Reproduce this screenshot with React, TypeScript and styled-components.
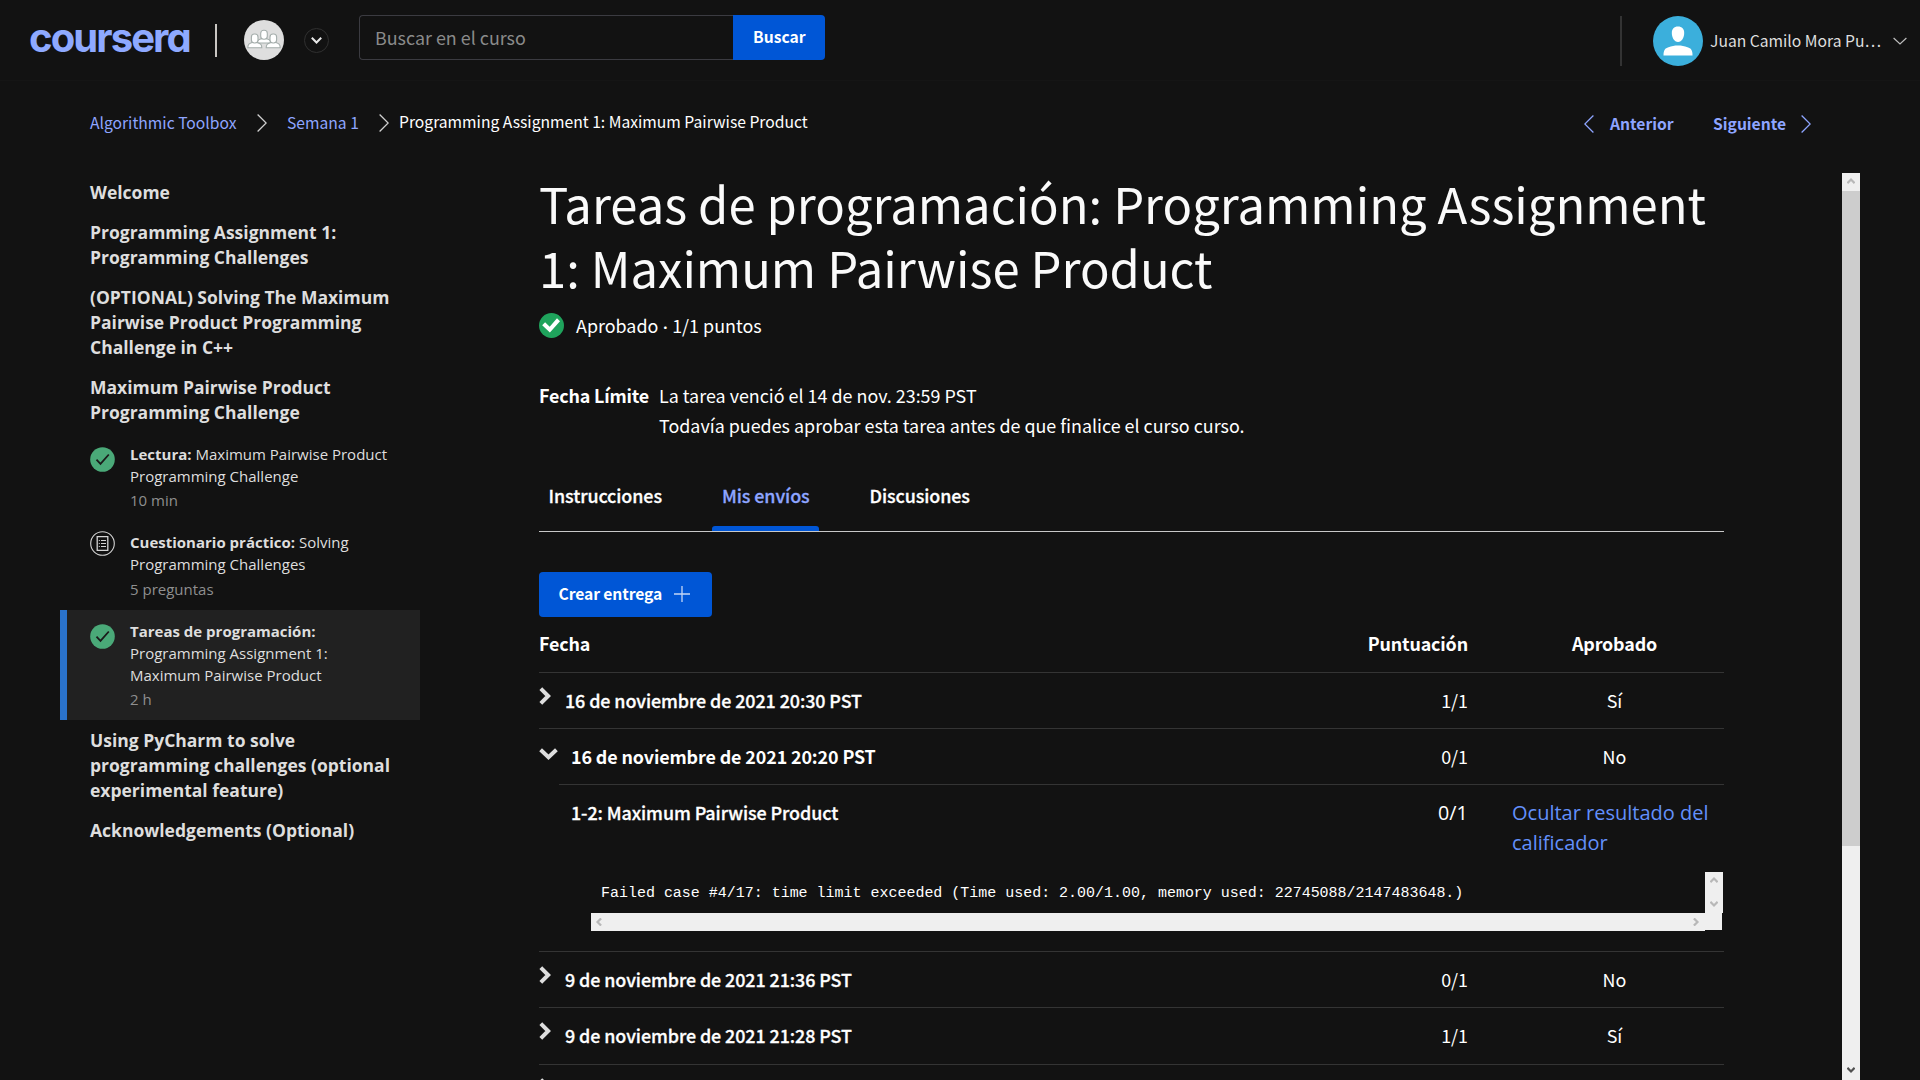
import React from "react";
import styled, { createGlobalStyle } from "styled-components";

const sans = `"Noto Sans CJK SC", "Noto Sans", sans-serif`;
const open = `"Open Sans", "Noto Sans", sans-serif`;

const GlobalStyle = createGlobalStyle`
  * { box-sizing: border-box; }
  html, body { margin: 0; padding: 0; background: #121212; overflow: hidden; }
  svg { display: block; flex: none; }
  button, input { font: inherit; border: 0; margin: 0; padding: 0; background: none; }
`;

const Page = styled.div`
  width: 1920px;
  height: 1080px;
  overflow: hidden;
  background: #121212;
  color: #fff;
  font-family: ${sans};
  font-size: 17.9px;
  display: flex;
  flex-direction: column;
`;

const Label = styled.span<{ $size?: number; $weight?: number; $ls?: number; $color?: string }>`
  display: block;
  white-space: nowrap;
  font-size: ${(p) => p.$size ?? 17.9}px;
  font-weight: ${(p) => p.$weight ?? 400};
  letter-spacing: ${(p) => p.$ls ?? 0}px;
  color: ${(p) => p.$color ?? "inherit"};
`;
const SmallLabel = styled(Label)`
  font-size: 15.66px;
`;
const SemiLabel = styled(Label)`
  font-weight: 500;
  letter-spacing: -0.08px;
  -webkit-text-stroke: 0.3px currentColor;
`;
const Dot = styled.span`
  font-family: Lato, sans-serif;
`;

/* Header */
const Header = styled.header`
  height: 81px;
  flex: none;
  display: flex;
  align-items: flex-start;
  border-bottom: 1px solid #151515;
`;
const Logo = styled.div`
  margin: 13px 0 0 29px;
  width: 186px;
  height: 50px;
  line-height: 50px;
  font-family: Inter, sans-serif;
  font-size: 40px;
  font-weight: 700;
  letter-spacing: -1.9px;
  font-feature-settings: "cv11" 1;
  color: #8ea9ff;
`;
const LogoDivider = styled.div`
  width: 2px;
  height: 33px;
  margin-top: 24px;
  background: #c9c6c2;
`;
const GroupBadge = styled.div`
  width: 40px;
  height: 40px;
  margin: 20px 0 0 27px;
  padding-bottom: 3px;
  border-radius: 50%;
  background: #dedede;
  display: flex;
  align-items: center;
  justify-content: center;
`;
const RoundButton = styled.button`
  width: 25px;
  height: 25px;
  margin: 28px 0 0 20px;
  border: 1px solid #303030;
  border-radius: 50%;
  display: flex;
  align-items: center;
  justify-content: center;
`;
const Search = styled.form`
  display: flex;
  height: 45px;
  margin: 15px 0 0 30px;
`;
const SearchField = styled.div`
  width: 374px;
  border: 1px solid #3b3b41;
  border-right: 0;
  border-radius: 4px 0 0 4px;
  padding-left: 15px;
  line-height: 43px;
`;
const SearchButton = styled.button`
  width: 92px;
  border-radius: 0 4px 4px 0;
  background: #0056d6;
  color: #fff;
  line-height: 43px;
  padding: 0 0 2px 20px;
  text-align: left;
`;
const Account = styled.div`
  margin: 16px 0 0 auto;
  width: 300px;
  height: 50px;
  border-left: 2px solid #333;
  padding-left: 31px;
  display: flex;
  align-items: center;
`;
const AccountName = styled.div`
  width: 190px;
  padding-left: 7px;
  line-height: 50px;
  color: #dfdfdf;
`;

/* Breadcrumbs */
const CrumbBar = styled.nav`
  height: 92px;
  flex: none;
  display: flex;
  align-items: flex-start;
  padding-left: 90px;
  color: #8ea5ff;
`;
const Crumb = styled.div<{ $w: number; $top?: number }>`
  width: ${(p) => p.$w}px;
  margin-top: ${(p) => p.$top ?? 27}px;
  line-height: 30px;
`;
const CrumbIcon = styled.div<{ $w: number }>`
  width: ${(p) => p.$w}px;
  margin-top: 33px;
`;
const Pager = styled.div`
  margin: 34px 109px 0 auto;
  width: 227px;
  display: flex;
  align-items: flex-start;
  line-height: 30px;
`;
const PagerText = styled.div<{ $w: number }>`
  width: ${(p) => p.$w}px;
  padding-left: 16px;
  margin-top: -6px;
`;

/* Body */
const Body = styled.div`
  height: 907px;
  flex: none;
  display: flex;
`;
const Sidebar = styled.aside`
  width: 360px;
  margin-left: 60px;
  padding-top: 7px;
  font-family: ${open};
  color: #dedede;
`;
const Section = styled.h3<{ $gap?: number; $top?: number }>`
  margin: ${(p) => p.$top ?? 0}px 0 ${(p) => p.$gap ?? 15}px;
  padding-left: 30px;
  font-size: 17.5px;
  font-weight: 700;
  line-height: 25px;
  white-space: nowrap;
`;
const Item = styled.div<{ $active?: boolean; $h: number; $top: number }>`
  height: ${(p) => p.$h}px;
  padding: ${(p) => p.$top}px 0 0 23px;
  display: flex;
  border-left: 7px solid ${(p) => (p.$active ? "#2a73cc" : "transparent")};
  background: ${(p) => (p.$active ? "#212121" : "transparent")};
`;
const ItemIcon = styled.div<{ $top: number }>`
  width: 40px;
  padding-top: ${(p) => p.$top}px;
`;
const ItemText = styled.div`
  font-size: 15px;
  line-height: 22px;
  white-space: nowrap;
`;
const ItemMeta = styled.div<{ $top: number }>`
  margin-top: ${(p) => p.$top}px;
  color: #8f8f8f;
`;

const Main = styled.main`
  width: 1185px;
  margin-left: 119px;
`;
const Title = styled.h1`
  margin: -2px 0 0;
  font-size: 48.95px;
  font-weight: 400;
  line-height: 64px;
  white-space: nowrap;
  color: #fafafa;
`;
const Status = styled.div`
  display: flex;
  align-items: center;
  gap: 12px;
  height: 30px;
  line-height: 30px;
  margin-top: 11px;
`;
const Deadline = styled.div`
  display: flex;
  margin-top: 40px;
  line-height: 30px;
`;
const DeadlineLabel = styled.div`
  width: 120px;
`;
const Tabs = styled.div`
  display: flex;
  margin-top: 32px;
  height: 60px;
  border-bottom: 1px solid #c8c8c8;
`;
const Tab = styled.div<{ $w: number; $gap?: number; $active?: boolean }>`
  width: ${(p) => p.$w}px;
  margin-right: ${(p) => p.$gap ?? 0}px;
  display: flex;
  flex-direction: column;
  justify-content: space-between;
  padding: 8px 0 0 ${(p) => (p.$active ? 10 : 9.5)}px;
  line-height: 30px;
  color: ${(p) => (p.$active ? "#8ea5ff" : "#fff")};
`;
const TabMarker = styled.div`
  height: 5px;
  margin-left: -10px;
  border-radius: 3px 3px 0 0;
  background: #0056d6;
`;
const CreateButton = styled.button`
  display: flex;
  align-items: center;
  justify-content: space-between;
  width: 173px;
  height: 45px;
  margin-top: 40px;
  padding: 0 22px 2px 19.5px;
  border-radius: 4px;
  background: #0056d6;
  color: #fff;
  line-height: 43px;
`;

const Row = styled.div<{ $h?: number }>`
  display: grid;
  grid-template-columns: 1fr 200px 188px 68px;
  height: ${(p) => p.$h ?? 56}px;
  line-height: 55px;
  border-bottom: 1px solid #343434;
`;
const HeadRow = styled(Row)`
  line-height: 52px;
`;
const DateCell = styled.div<{ $open?: boolean }>`
  display: flex;
  gap: ${(p) => (p.$open ? 13 : 14)}px;
`;
const Caret = styled.div<{ $top: number }>`
  padding-top: ${(p) => p.$top}px;
`;
const Score = styled.div`
  display: flex;
  justify-content: flex-end;
`;
const Passed = styled.div`
  display: flex;
  justify-content: center;
  padding-left: 105px;
  width: 188px;
`;
const Indented = styled.div`
  margin: -1px 0 0 20px;
  border-top: 1px solid #343434;
`;
const ExpandedRow = styled(Row)`
  border-bottom-color: transparent;
`;
const Detail = styled.div`
  display: flex;
  height: 87px;
  padding: 12px 0 0 12px;
  line-height: 30px;
`;
const DetailName = styled.div`
  width: 867px;
`;
const DetailScore = styled.div`
  width: 74px;
  padding-top: 1px;
  font-family: ${open};
`;
const GraderLink = styled.a`
  width: 212px;
  padding-top: 1px;
  font-family: ${open};
  color: #6390fb;
`;
const Output = styled.div`
  width: 1132px;
  height: 59px;
  margin-left: 32px;
  display: grid;
  grid-template-columns: 1fr 18px;
  grid-template-rows: 41px 18px;
`;
const Log = styled.pre`
  margin: 0;
  padding: 10px 0 0 10px;
  font-family: "Liberation Mono", monospace;
  font-size: 14.98px;
  line-height: 22px;
`;
const Track = styled.div<{ $vertical?: boolean }>`
  display: flex;
  flex-direction: ${(p) => (p.$vertical ? "column" : "row")};
  justify-content: space-between;
  align-items: center;
  padding: ${(p) => (p.$vertical ? "4px 0 5px" : "0 5px 1px 4px")};
  background: #efefef;
`;
const Corner = styled.div`
  background: #efefef;
  height: 17px;
  width: 17px;
`;
const EndLine = styled.div`
  height: 21px;
  border-bottom: 1px solid #343434;
`;
const PageScroll = styled.div`
  width: 18px;
  margin-left: 118px;
  background: #efefef;
  display: flex;
  flex-direction: column;
  align-items: center;
`;
const ScrollThumb = styled.div`
  width: 18px;
  height: 655px;
  margin: 6px 0 auto;
  background: #cdcdcd;
`;
const ScrollArrowBox = styled.div<{ $top?: number; $bottom?: number }>`
  padding: ${(p) => p.$top ?? 0}px 0 ${(p) => p.$bottom ?? 0}px;
`;

type Dir = "left" | "right" | "up" | "down";
const ThinChevron = ({ dir, color = "#d0d0d0" }: { dir: "left" | "right"; color?: string }) => (
  <svg width="10" height="18" viewBox="0 0 10 18" fill="none" stroke={color} strokeWidth="1.3">
    <path d={dir === "right" ? "M.6.5 9.2 9 .6 17.5" : "M9.4.5.8 9l8.6 8.5"} />
  </svg>
);

const angle: Record<Dir, number> = { up: 0, right: 90, down: 180, left: 270 };
const ScrollArrow = ({ dir, color = "#b8b8b8" }: { dir: Dir; color?: string }) => (
  <svg width="8" height="8" viewBox="0 0 8 8" fill="none" stroke={color} strokeWidth="2.2">
    <path transform={`rotate(${angle[dir]} 4 4)`} d="M.4 6.1 4 2.500l3.600 3.600" />
  </svg>
);

const BoldRight = () => (
  <svg width="12" height="18" viewBox="0 0 12 18" fill="none" stroke="#dedede" strokeWidth="4">
    <path d="M1.8 1.6 9.2 9l-7.4 7.4" />
  </svg>
);
const BoldDown = () => (
  <svg width="19" height="12" viewBox="0 0 19 12" fill="none" stroke="#dedede" strokeWidth="4">
    <path d="M1.6 1.8 9.5 9.2l7.9-7.4" />
  </svg>
);

const DoneIcon = () => (
  <svg width="25" height="25" viewBox="0 0 25 25">
    <circle cx="12.5" cy="12.5" r="12.3" fill="#4aa978" />
    <path d="M6.5 12.6l4 4.2 8.3-9.3" fill="none" stroke="#1b1b1b" strokeWidth="1.8" />
  </svg>
);
const QuizIcon = () => (
  <svg width="25" height="25" viewBox="0 0 25 25" fill="none" stroke="#d4d4d4">
    <circle cx="12.5" cy="12.5" r="11.8" strokeWidth="1.1" />
    <path d="M7.2 5.7h10.6v13.6H7.2z" strokeWidth="1.3" />
    <path d="M11 9.5h5M11 12.5h5M11 15.5h5M8.8 9.5h1M8.8 12.5h1M8.8 15.5h1" strokeWidth="1.1" />
  </svg>
);
const PassedIcon = () => (
  <svg width="25" height="25" viewBox="0 0 25 25">
    <circle cx="12.5" cy="12.5" r="12.5" fill="#1fa35c" />
    <path d="M3.2 12.200l2.900-2.900 4.600 4.400 7.300-8.400 3 2.900-10.100 11.300z" fill="#fff" />
  </svg>
);
const GroupIcon = () => (
  <svg width="34" height="20" viewBox="0 0 34 20" fill="#fff" stroke="#a4adab" strokeWidth="1.100">
    <path d="M10 14c0-3.500 2.500-3.500 5-4.500h4c2.500 1 5 1 5 4.500z" />
    <rect x="13.700" y="1.200" width="6.600" height="9" rx="3" />
    <path d="M.8 18.800c0-4 1.800-4.300 5-5.500h3.800c3.200 1.200 5.200 1.500 5.200 5.500zM19.200 18.800c0-4 2-4.300 5.200-5.500h3.800c3.200 1.200 5 1.500 5 5.500z" />
    <rect x="4.400" y="5" width="6.600" height="9" rx="3" />
    <rect x="23" y="5" width="6.600" height="9" rx="3" />
  </svg>
);
const AvatarIcon = () => (
  <svg width="50" height="50" viewBox="0 0 50 50">
    <circle cx="25" cy="25" r="25" fill="#3bafdc" />
    <path d="M25 10.500c4 0 6.200 2.600 6.200 6.500 0 4.600-2.400 9-6.200 9s-6.200-4.400-6.200-9c0-3.900 2.200-6.500 6.200-6.500z" fill="#fff" />
    <path d="M10.500 39.500c0-6 1.500-7 5-8.300 3-1.100 6-1.700 9.500-1.700s6.500.6 9.500 1.700c3.500 1.300 5 2.300 5 8.300z" fill="#fff" />
  </svg>
);

type Submission = { date: string; score: string; passed: string; height?: number };
const SubmissionRow = ({ date, score, passed, height }: Submission) => (
  <Row $h={height}>
    <DateCell>
      <Caret $top={14}><BoldRight /></Caret>
      <SemiLabel>{date}</SemiLabel>
    </DateCell>
    <Score><Label>{score}</Label></Score>
    <Passed><Label>{passed}</Label></Passed>
  </Row>
);

export default function App() {
  return (
    <Page>
      <GlobalStyle />
      <Header>
        <Logo>coursera</Logo>
        <LogoDivider />
        <GroupBadge><GroupIcon /></GroupBadge>
        <RoundButton>
          <svg width="11" height="7" viewBox="0 0 11 7" fill="none" stroke="#e8e8e8" strokeWidth="2">
            <path d="M.8.8l4.700 4.700L10.200.8" />
          </svg>
        </RoundButton>
        <Search>
          <SearchField><Label $color="#8a8a8a">Buscar en el curso</Label></SearchField>
          <SearchButton type="button"><SmallLabel $weight={700}>Buscar</SmallLabel></SearchButton>
        </Search>
        <Account>
          <AvatarIcon />
          <AccountName><SmallLabel>Juan Camilo Mora Pu…</SmallLabel></AccountName>
          <svg width="14" height="8" viewBox="0 0 14 8" fill="none" stroke="#bdbdbd" strokeWidth="1.200">
            <path d="M.6 1 7 7l6.400-6" />
          </svg>
        </Account>
      </Header>

      <CrumbBar>
        <Crumb $w={167}><SmallLabel>Algorithmic Toolbox</SmallLabel></Crumb>
        <CrumbIcon $w={30}><ThinChevron dir="right" /></CrumbIcon>
        <Crumb $w={92}><SmallLabel>Semana 1</SmallLabel></Crumb>
        <CrumbIcon $w={20}><ThinChevron dir="right" /></CrumbIcon>
        <Crumb $w={420} $top={26}><SmallLabel $color="#fff">Programming Assignment 1: Maximum Pairwise Product</SmallLabel></Crumb>
        <Pager>
          <ThinChevron dir="left" color="#8ea5ff" />
          <PagerText $w={103}><SmallLabel $weight={700}>Anterior</SmallLabel></PagerText>
          <PagerText $w={104}><SmallLabel $weight={700}>Siguiente</SmallLabel></PagerText>
          <ThinChevron dir="right" color="#8ea5ff" />
        </Pager>
      </CrumbBar>

      <Body>
        <Sidebar>
          <Section>Welcome</Section>
          <Section>Programming Assignment 1:<br />Programming Challenges</Section>
          <Section>(OPTIONAL) Solving The Maximum<br />Pairwise Product Programming<br />Challenge in C++</Section>
          <Section $gap={9}>Maximum Pairwise Product<br />Programming Challenge</Section>
          <Item $h={88} $top={9}>
            <ItemIcon $top={4}><DoneIcon /></ItemIcon>
            <ItemText>
              <b>Lectura:</b> Maximum Pairwise Product<br />Programming Challenge
              <ItemMeta $top={2}>10 min</ItemMeta>
            </ItemText>
          </Item>
          <Item $h={88} $top={9}>
            <ItemIcon $top={0}><QuizIcon /></ItemIcon>
            <ItemText>
              <b>Cuestionario práctico:</b> Solving<br />Programming Challenges
              <ItemMeta $top={3}>5 preguntas</ItemMeta>
            </ItemText>
          </Item>
          <Item $active $h={110} $top={10}>
            <ItemIcon $top={4}><DoneIcon /></ItemIcon>
            <ItemText>
              <b>Tareas de programación:</b><br />Programming Assignment 1:<br />Maximum Pairwise Product
              <ItemMeta $top={2}>2 h</ItemMeta>
            </ItemText>
          </Item>
          <Section $top={8}>Using PyCharm to solve<br />programming challenges (optional<br />experimental feature)</Section>
          <Section>Acknowledgements (Optional)</Section>
        </Sidebar>

        <Main>
          <Title>Tareas de programación: Programming Assignment<br />1: Maximum Pairwise Product</Title>
          <Status>
            <PassedIcon />
            <Label>Aprobado<Dot> · </Dot>1/1 puntos</Label>
          </Status>
          <Deadline>
            <DeadlineLabel><Label $weight={700} $ls={-0.17}>Fecha Límite</Label></DeadlineLabel>
            <div>
              <Label>La tarea venció el 14 de nov. 23:59 PST</Label>
              <Label>Todavía puedes aprobar esta tarea antes de que finalice el curso curso.</Label>
            </div>
          </Deadline>
          <Tabs>
            <Tab $w={133} $gap={40}><SemiLabel>Instrucciones</SemiLabel></Tab>
            <Tab $w={107} $gap={41} $active><SemiLabel>Mis envíos</SemiLabel><TabMarker /></Tab>
            <Tab $w={120}><SemiLabel>Discusiones</SemiLabel></Tab>
          </Tabs>
          <CreateButton>
            <SmallLabel $weight={700} $ls={-0.1}>Crear entrega</SmallLabel>
            <svg width="16" height="16" viewBox="0 0 16 16" stroke="#c3d6f5" strokeWidth="1.300">
              <path d="M8 0v16M0 8h16" />
            </svg>
          </CreateButton>

          <HeadRow>
            <Label $weight={700} $ls={-0.15}>Fecha</Label>
            <Score><Label $weight={700} $ls={-0.15}>Puntuación</Label></Score>
            <Passed><Label $weight={700} $ls={-0.15}>Aprobado</Label></Passed>
          </HeadRow>
          <SubmissionRow date="16 de noviembre de 2021 20:30 PST" score="1/1" passed="Sí" />
          <ExpandedRow>
            <DateCell $open>
              <Caret $top={19}><BoldDown /></Caret>
              <Label $weight={700} $ls={-0.12}>16 de noviembre de 2021 20:20 PST</Label>
            </DateCell>
            <Score><Label>0/1</Label></Score>
            <Passed><Label>No</Label></Passed>
          </ExpandedRow>
          <Indented>
            <Detail>
              <DetailName><SemiLabel>1-2: Maximum Pairwise Product</SemiLabel></DetailName>
              <DetailScore><Label $size={19.700}>0/1</Label></DetailScore>
              <GraderLink><Label $size={20}>Ocultar resultado del<br />calificador</Label></GraderLink>
            </Detail>
            <Output>
              <Log>Failed case #4/17: time limit exceeded (Time used: 2.00/1.00, memory used: 22745088/2147483648.)</Log>
              <Track $vertical><ScrollArrow dir="up" /><ScrollArrow dir="down" /></Track>
              <Track><ScrollArrow dir="left" /><ScrollArrow dir="right" /></Track>
              <Corner />
            </Output>
          </Indented>
          <EndLine />
          <SubmissionRow date="9 de noviembre de 2021 21:36 PST" score="0/1" passed="No" />
          <SubmissionRow date="9 de noviembre de 2021 21:28 PST" score="1/1" passed="Sí" height={57} />
          <DateCell>
            <Caret $top={13}><BoldRight /></Caret>
          </DateCell>
        </Main>

        <PageScroll>
          <ScrollArrowBox $top={4}><ScrollArrow dir="up" /></ScrollArrowBox>
          <ScrollThumb />
          <ScrollArrowBox $bottom={6}><ScrollArrow dir="down" color="#505050" /></ScrollArrowBox>
        </PageScroll>
      </Body>
    </Page>
  );
}
